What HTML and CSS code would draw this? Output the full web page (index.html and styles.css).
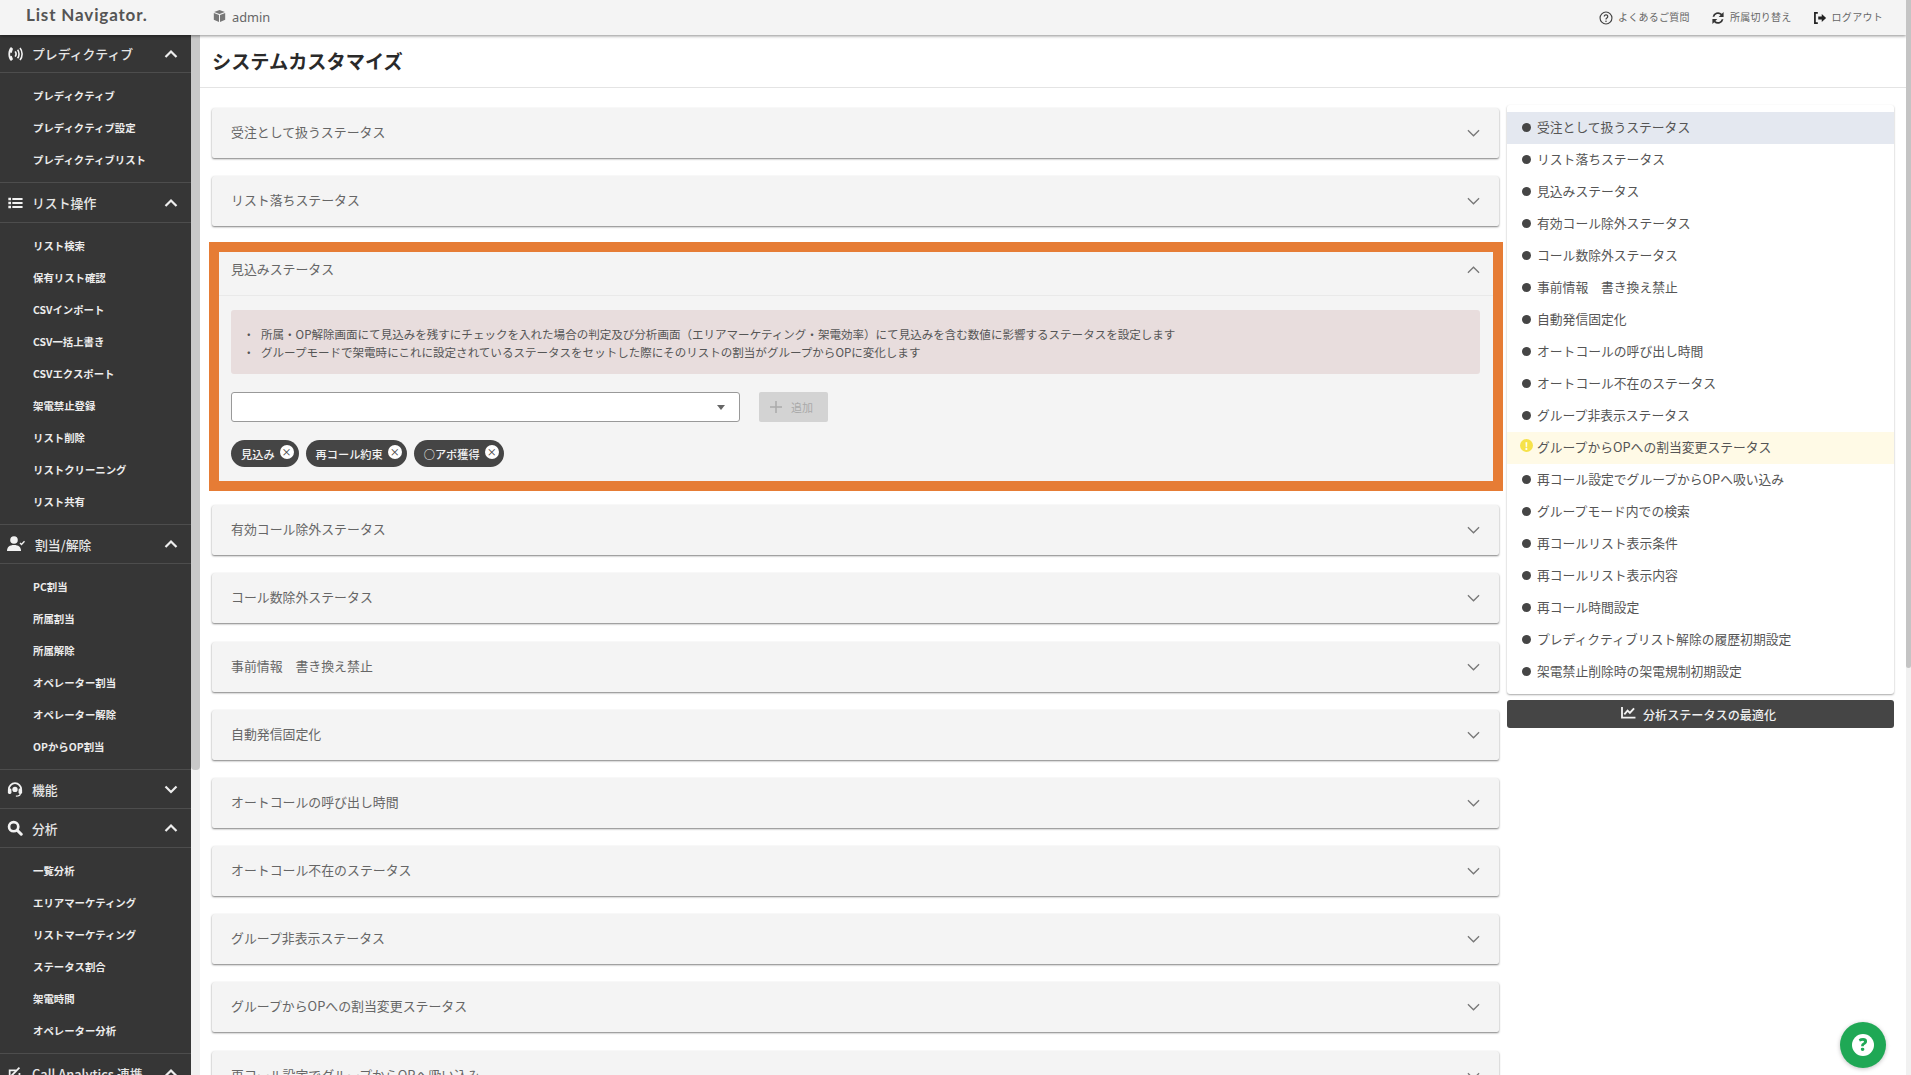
FILE: index.html
```html
<!DOCTYPE html>
<html lang="ja">
<head>
<meta charset="utf-8">
<title>システムカスタマイズ</title>
<link rel="stylesheet" href="styles.css">
</head>
<body>
<div class="app">
  <header class="topbar">
    <div class="logo">List Navigator.</div>
    <div class="tenant">
      <svg class="tenant-icon" viewBox="0 0 16 16"><path d="M8 .5 14.600 3 8 5.600 1.400 3z"/><path d="M1 4.200 7.400 6.800v8.700L1 12.700z"/><path d="M15 4.200 8.600 6.800v8.700l6.400-2.800z"/></svg>
      <span>admin</span>
    </div>
    <nav class="toplinks">
      <a class="toplink">
        <svg class="top-icon" viewBox="0 0 16 16"><circle cx="8" cy="8" r="6.800" fill="none" stroke="#444" stroke-width="1.300"/><path d="M6 6.300a2 2 0 1 1 3 1.800c-.7.4-1 .8-1 1.600" fill="none" stroke="#444" stroke-width="1.400"/><circle cx="8" cy="11.800" r=".9" fill="#444"/></svg>
        <span>よくあるご質問</span>
      </a>
      <a class="toplink">
        <svg class="top-icon" viewBox="0 0 16 16"><path d="M1.800 6.600A6.300 6.300 0 0 1 12.400 3.200L14.400 1.200v5.600H8.800l2.200-2.200a4.300 4.300 0 0 0-7.200 2z" fill="#333"/><path d="M14.200 9.400A6.300 6.300 0 0 1 3.600 12.800L1.600 14.800V9.200h5.600L5 11.400a4.300 4.300 0 0 0 7.200-2z" fill="#333"/></svg>
        <span>所属切り替え</span>
      </a>
      <a class="toplink">
        <svg class="top-icon" viewBox="0 0 16 16"><path d="M5.500 2.200H2.200v11.600h3.300" fill="none" stroke="#222" stroke-width="2"/><path d="M6 6.400h4V3.400L15 8l-5 4.600v-3H6z" fill="#222"/></svg>
        <span>ログアウト</span>
      </a>
    </nav>
  </header>
  <div class="body-row">
    <div class="side-wrap">
      <aside class="sidebar">
        <div class="side-head side-head-short">
          <svg class="side-icon" viewBox="1 1.500 16 15"><path d="M5 2C1.500 4.500 1.500 13.500 5 16l2-1.800-1.300-3.400-1.300.4c-.4-1.200-.4-2.400 0-3.600l1.300.4L7 3.800z" fill="#f2f2f2"/><path d="M9.200 6.400c1 1.400 1 3.800 0 5.200M11.600 4.700c1.900 2.300 1.900 6.300 0 8.600M14 3c2.800 3.300 2.800 8.700 0 12" fill="none" stroke="#f2f2f2" stroke-width="1.600"/></svg>
          <span class="side-title">プレディクティブ</span>
          <svg class="side-chev" viewBox="0 0 14 10"><path d="M1.500 8 7 2.500 12.500 8" fill="none" stroke="#eee" stroke-width="2.200"/></svg>
        </div>
        <ul class="side-list">
          <li>プレディクティブ</li><li>プレディクティブ設定</li><li>プレディクティブリスト</li>
        </ul>
        <div class="side-head side-head-tall">
          <svg class="side-icon" viewBox="0 0 18 18"><path d="M1.500 3h3v3h-3zM1.500 7.500h3v3h-3zM1.500 12h3v3h-3zM6 3.400h11.500v2.300H6zM6 7.900h11.500v2.300H6zM6 12.400h11.500v2.300H6z" fill="#f2f2f2"/></svg>
          <span class="side-title">リスト操作</span>
          <svg class="side-chev" viewBox="0 0 14 10"><path d="M1.500 8 7 2.500 12.500 8" fill="none" stroke="#eee" stroke-width="2.200"/></svg>
        </div>
        <ul class="side-list">
          <li>リスト検索</li><li>保有リスト確認</li><li>CSVインポート</li><li>CSV一括上書き</li><li>CSVエクスポート</li><li>架電禁止登録</li><li>リスト削除</li><li>リストクリーニング</li><li>リスト共有</li>
        </ul>
        <div class="side-head">
          <svg class="side-icon side-icon-wide" viewBox="0 0 18 16"><circle cx="7" cy="4" r="3.800" fill="#f2f2f2"/><path d="M0 15c0-4 2.500-6 7-6s7 2 7 6z" fill="#f2f2f2"/><path d="M13 7l1.500 1.500 3-3.300" fill="none" stroke="#f2f2f2" stroke-width="1.300"/></svg>
          <span class="side-title side-title-wide">割当/解除</span>
          <svg class="side-chev" viewBox="0 0 14 10"><path d="M1.500 8 7 2.500 12.500 8" fill="none" stroke="#eee" stroke-width="2.200"/></svg>
        </div>
        <ul class="side-list">
          <li>PC割当</li><li>所属割当</li><li>所属解除</li><li>オペレーター割当</li><li>オペレーター解除</li><li>OPからOP割当</li>
        </ul>
        <div class="side-head">
          <svg class="side-icon" viewBox="0 0 18 18"><path d="M2 9.500a7 7 0 0 1 14 0" fill="none" stroke="#f2f2f2" stroke-width="2"/><rect x="1" y="8.500" width="4" height="6" rx="1.500" fill="#f2f2f2"/><rect x="13" y="8.500" width="4" height="6" rx="1.500" fill="#f2f2f2"/><path d="M15 14c0 2-2 3-5 3" fill="none" stroke="#f2f2f2" stroke-width="1.400"/><circle cx="9" cy="9.500" r="3" fill="#f2f2f2"/></svg>
          <span class="side-title">機能</span>
          <svg class="side-chev" viewBox="0 0 14 10"><path d="M1.500 2.500 7 8l5.500-5.500" fill="none" stroke="#eee" stroke-width="2.200"/></svg>
        </div>
        <div class="side-head">
          <svg class="side-icon" viewBox="0 0 18 18"><circle cx="7.500" cy="7.500" r="5.200" fill="none" stroke="#f2f2f2" stroke-width="3"/><path d="M11.500 11.500 16 16" stroke="#f2f2f2" stroke-width="3.400" stroke-linecap="round"/></svg>
          <span class="side-title">分析</span>
          <svg class="side-chev" viewBox="0 0 14 10"><path d="M1.500 8 7 2.500 12.500 8" fill="none" stroke="#eee" stroke-width="2.200"/></svg>
        </div>
        <ul class="side-list">
          <li>一覧分析</li><li>エリアマーケティング</li><li>リストマーケティング</li><li>ステータス割合</li><li>架電時間</li><li>オペレーター分析</li>
        </ul>
        <div class="side-head">
          <svg class="side-icon" viewBox="0 0 18 18"><path d="M3 13V6h7M5 16h9V9" fill="none" stroke="#f2f2f2" stroke-width="2"/><path d="M5 12l9-9" stroke="#f2f2f2" stroke-width="2"/></svg>
          <span class="side-title">Call Analytics 連携</span>
          <svg class="side-chev" viewBox="0 0 14 10"><path d="M1.500 8 7 2.500 12.500 8" fill="none" stroke="#eee" stroke-width="2.200"/></svg>
        </div>
      </aside>
      <div class="side-scroll"><div class="side-thumb"></div></div>
    </div>
    <main class="main">
      <div class="page-title"><h1>システムカスタマイズ</h1></div>
      <div class="content">
        <section class="accordions">
          <div class="acc"><span class="acc-label">受注として扱うステータス</span><svg class="acc-chev" viewBox="0 0 14 8"><path d="M1 1l6 6 6-6"/></svg></div>
          <div class="acc"><span class="acc-label">リスト落ちステータス</span><svg class="acc-chev" viewBox="0 0 14 8"><path d="M1 1l6 6 6-6"/></svg></div>
          <div class="panel">
            <div class="panel-head"><span class="acc-label">見込みステータス</span><svg class="acc-chev" viewBox="0 0 14 8"><path d="M1 7l6-6 6 6"/></svg></div>
            <div class="panel-body">
              <ul class="alert">
                <li>所属・OP解除画面にて見込みを残すにチェックを入れた場合の判定及び分析画面（エリアマーケティング・架電効率）にて見込みを含む数値に影響するステータスを設定します</li>
                <li>グループモードで架電時にこれに設定されているステータスをセットした際にそのリストの割当がグループからOPに変化します</li>
              </ul>
              <div class="add-row">
                <div class="select"><i class="caret"></i></div>
                <div class="add-btn"><svg class="plus" viewBox="0 0 12 12"><path d="M6 0v12M0 6h12"/></svg><span>追加</span></div>
              </div>
              <div class="chips">
                <span class="chip">見込み<i class="chip-x">×</i></span>
                <span class="chip">再コール約束<i class="chip-x">×</i></span>
                <span class="chip">○アポ獲得<i class="chip-x">×</i></span>
              </div>
            </div>
            <div class="highlight"></div>
          </div>
          <div class="acc"><span class="acc-label">有効コール除外ステータス</span><svg class="acc-chev" viewBox="0 0 14 8"><path d="M1 1l6 6 6-6"/></svg></div>
          <div class="acc"><span class="acc-label">コール数除外ステータス</span><svg class="acc-chev" viewBox="0 0 14 8"><path d="M1 1l6 6 6-6"/></svg></div>
          <div class="acc"><span class="acc-label">事前情報　書き換え禁止</span><svg class="acc-chev" viewBox="0 0 14 8"><path d="M1 1l6 6 6-6"/></svg></div>
          <div class="acc"><span class="acc-label">自動発信固定化</span><svg class="acc-chev" viewBox="0 0 14 8"><path d="M1 1l6 6 6-6"/></svg></div>
          <div class="acc"><span class="acc-label">オートコールの呼び出し時間</span><svg class="acc-chev" viewBox="0 0 14 8"><path d="M1 1l6 6 6-6"/></svg></div>
          <div class="acc"><span class="acc-label">オートコール不在のステータス</span><svg class="acc-chev" viewBox="0 0 14 8"><path d="M1 1l6 6 6-6"/></svg></div>
          <div class="acc"><span class="acc-label">グループ非表示ステータス</span><svg class="acc-chev" viewBox="0 0 14 8"><path d="M1 1l6 6 6-6"/></svg></div>
          <div class="acc"><span class="acc-label">グループからOPへの割当変更ステータス</span><svg class="acc-chev" viewBox="0 0 14 8"><path d="M1 1l6 6 6-6"/></svg></div>
          <div class="acc"><span class="acc-label">再コール設定でグループからOPへ吸い込み</span><svg class="acc-chev" viewBox="0 0 14 8"><path d="M1 1l6 6 6-6"/></svg></div>
        </section>
        <aside class="right-col">
          <ul class="toc">
            <li class="toc-item is-active">受注として扱うステータス</li>
            <li class="toc-item">リスト落ちステータス</li>
            <li class="toc-item">見込みステータス</li>
            <li class="toc-item">有効コール除外ステータス</li>
            <li class="toc-item">コール数除外ステータス</li>
            <li class="toc-item">事前情報　書き換え禁止</li>
            <li class="toc-item">自動発信固定化</li>
            <li class="toc-item">オートコールの呼び出し時間</li>
            <li class="toc-item">オートコール不在のステータス</li>
            <li class="toc-item">グループ非表示ステータス</li>
            <li class="toc-item is-warn">グループからOPへの割当変更ステータス</li>
            <li class="toc-item">再コール設定でグループからOPへ吸い込み</li>
            <li class="toc-item">グループモード内での検索</li>
            <li class="toc-item">再コールリスト表示条件</li>
            <li class="toc-item">再コールリスト表示内容</li>
            <li class="toc-item">再コール時間設定</li>
            <li class="toc-item">プレディクティブリスト解除の履歴初期設定</li>
            <li class="toc-item">架電禁止削除時の架電規制初期設定</li>
          </ul>
          <div class="opt-btn">
            <svg class="opt-icon" viewBox="0 0 16 14"><path d="M1 1v11.500h14.500" fill="none" stroke="#f2f2f2" stroke-width="2"/><path d="M3.500 9 7 5l2.500 2.500L14 2.500" fill="none" stroke="#f2f2f2" stroke-width="2"/></svg>
            <span>分析ステータスの最適化</span>
          </div>
        </aside>
      </div>
    </main>
  </div>
</div>
<div class="page-scroll"><div class="page-thumb"></div></div>
<a class="help"><span class="help-q">?</span></a>
</body>
</html>
```
FILE: styles.css
```css
* { box-sizing: border-box; }
html, body { margin: 0; height: 100%; overflow: hidden; }
body {
  display: flex;
  font-family: "Noto Sans CJK JP", "Noto Sans", sans-serif;
  color: #555;
  background: #fff;
}
ul { margin: 0; padding: 0; list-style: none; }
i { font-style: normal; }

.app { flex: 1; min-width: 0; height: 100%; display: flex; flex-direction: column; }

.topbar {
  flex: none;
  height: 35px;
  display: flex;
  align-items: center;
  background: #f4f4f4;
  box-shadow: 0 1px 3px rgba(0, 0, 0, .45);
  position: relative;
  z-index: 2;
}
.logo {
  width: 213px;
  padding: 0 0 6px 26px;
  font-family: "Lato", sans-serif;
  font-weight: 700;
  font-size: 17px;
  letter-spacing: .85px;
  color: #555;
}
.tenant { display: flex; align-items: center; gap: 6px; font-family: "Noto Sans", sans-serif; font-size: 12.800px; color: #666; padding-bottom: 1px; }
.tenant-icon { width: 13px; height: 14px; fill: #777; margin-top: -2px; }
.toplinks { margin-left: auto; display: flex; align-items: center; padding: 0 23px 2px 0; gap: 21px; }
.toplink { display: flex; align-items: center; gap: 5px; font-size: 10px; letter-spacing: .28px; color: #666; }
.top-icon { width: 14px; height: 14px; margin-top: 2px; }

.body-row { flex: 1; min-height: 0; display: flex; }

.side-wrap { flex: none; width: 200px; display: flex; overflow: hidden; }
.sidebar { width: 191px; background: #363636; color: #eee; overflow: hidden; }
.side-head {
  height: 39px;
  display: flex;
  align-items: center;
  padding: 0 13px 0 7px;
  border-bottom: 1px solid #4d4d4d;
}
.side-head-short { height: 38px; }
.side-head-tall { height: 40px; }
.side-icon { width: 16px; height: 16px; flex: none; }
.side-icon-wide { width: 18px; }
.side-title { flex: 1; margin-left: 9px; font-size: 12.850px; font-weight: 500; color: #e6e6e6; white-space: nowrap; }
.side-title-wide { margin-left: 10px; }
.side-chev { width: 14px; height: 10px; flex: none; }
.side-list { padding: 7px 0 6px; border-bottom: 1px solid #4d4d4d; }
.side-list li { height: 32px; line-height: 31px; padding-left: 33px; font-size: 10.400px; font-weight: 700; color: #ececec; white-space: nowrap; }
.side-scroll { width: 9px; background: #f1f1f1; }
.side-thumb { height: 735px; background: #c9c9c9; border-radius: 0 0 4px 4px; }

.main { flex: 1; min-width: 0; overflow: hidden; }
.page-title { height: 53px; padding: 13px 12px 0; border-bottom: 1px solid #e4e4e4; }
.page-title h1 { margin: 0; font-size: 19.200px; line-height: 26px; font-weight: 700; color: #2a2a2a; }
.content { display: flex; gap: 8px; padding: 17px 12px 0; }
.accordions { width: 1287px; flex: none; padding-top: 3px; }
.acc {
  height: 50px;
  margin-bottom: 18.200px;
  padding: 0 19px;
  display: flex;
  align-items: center;
  justify-content: space-between;
  background: #f4f4f4;
  border-radius: 3px 3px 2px 2px;
  box-shadow: 0 1px 2px rgba(0, 0, 0, .5);
  font-size: 12.900px;
  color: #666;
}
.acc-label { margin-top: -3px; }
.acc-chev { width: 13px; height: 8px; fill: none; stroke: #777; stroke-width: 1.400; }

.panel {
  position: relative;
  margin-bottom: 18.200px;
  background: #f4f4f4;
  font-size: 12.900px;
  color: #666;
}
.panel-head {
  height: 52px;
  padding: 0 19px;
  display: flex;
  align-items: center;
  justify-content: space-between;
  border-bottom: 1px solid #e9e9e9;
}
.panel-body { padding: 13.600px 19px 20px; }
.alert {
  height: 64px;
  padding: 15px 0 0 30px;
  background: #e8dddd;
  border-radius: 3px;
  font-size: 11.540px;
  line-height: 18px;
  color: #555;
}
.alert li { position: relative; }
.alert li::before { content: "・"; position: absolute; left: -18px; }
.add-row { display: flex; align-items: center; gap: 19px; margin-top: 18px; }
.select {
  position: relative;
  width: 509px;
  height: 30px;
  background: #fff;
  border: 1px solid #999;
  border-radius: 3px;
}
.caret {
  position: absolute;
  right: 14px;
  top: 12px;
  border-left: 4.500px solid transparent;
  border-right: 4.500px solid transparent;
  border-top: 5px solid #666;
}
.add-btn {
  width: 69px;
  height: 30px;
  display: flex;
  align-items: center;
  gap: 9px;
  padding-left: 11px;
  background: #d3d3d3;
  border-radius: 2px;
  font-size: 11px;
  color: #aaa;
}
.plus { width: 12px; height: 12px; stroke: #aaa; stroke-width: 1.500; fill: none; }
.chips { display: flex; gap: 7px; margin-top: 18px; }
.chip {
  height: 27px;
  display: flex;
  align-items: center;
  gap: 5px;
  padding: 1px 5px 0 10px;
  background: #454545;
  border-radius: 14px;
  font-size: 11.200px;
  font-weight: 500;
  color: #f2f2f2;
}
.chip-x {
  width: 14px;
  height: 14px;
  margin-top: -3px;
  border-radius: 50%;
  background: #fff;
  color: #444;
  font-size: 10px;
  line-height: 13px;
  text-align: center;
}
.highlight {
  position: absolute;
  left: -3px;
  right: -4px;
  top: -2.400px;
  bottom: -4.200px;
  border: 10px solid #e67c35;
  pointer-events: none;
}

.right-col { width: 387px; flex: none; }
.toc {
  padding: 7px 0 6px;
  background: #fff;
  border-radius: 3px;
  box-shadow: 0 1px 2px rgba(0, 0, 0, .35);
}
.toc-item {
  position: relative;
  height: 32px;
  line-height: 30px;
  padding-left: 30px;
  font-size: 12.800px;
  color: #555;
  white-space: nowrap;
}
.toc-item::before {
  content: "";
  position: absolute;
  left: 15px;
  top: 11px;
  width: 9px;
  height: 9px;
  border-radius: 50%;
  background: #454545;
}
.is-active { background: #e4e8f0; }
.is-warn { background: #fffae6; }
.is-warn::before {
  content: "!";
  left: 13px;
  top: 7px;
  width: 13px;
  height: 13px;
  background: #f6e24a;
  color: #fff;
  font-size: 10px;
  font-weight: 700;
  line-height: 13px;
  text-align: center;
}
.opt-btn {
  height: 28px;
  margin-top: 6px;
  padding-right: 4px;
  display: flex;
  align-items: center;
  justify-content: center;
  gap: 7px;
  background: #454545;
  border-radius: 3px;
  font-size: 12.100px;
  font-weight: 500;
  color: #f0f0f0;
}
.opt-icon { width: 15px; height: 13px; margin-top: -3px; }

.page-scroll { flex: none; width: 5px; height: 100%; background: #f1f1f1; position: relative; z-index: 3; }
.page-thumb { height: 668px; background: #c4c4c4; border-radius: 0 0 3px 3px; }

.help {
  position: fixed;
  left: 1840px;
  top: 1022px;
  width: 46px;
  height: 46px;
  display: flex;
  align-items: center;
  justify-content: center;
  background: #1fa855;
  border-radius: 50%;
  box-shadow: 0 1px 4px rgba(0, 0, 0, .25);
  z-index: 4;
}
.help-q {
  width: 22px;
  height: 22px;
  border-radius: 50%;
  background: #fff;
  color: #1fa855;
  font-family: "Noto Sans", sans-serif;
  font-weight: 900;
  font-size: 17px;
  line-height: 22px;
  text-align: center;
}
```
